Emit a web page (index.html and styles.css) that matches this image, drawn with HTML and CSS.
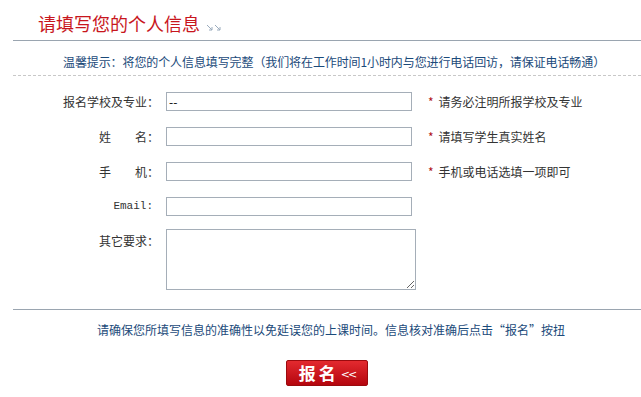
FILE: index.html
```html
<!DOCTYPE html>
<html lang="zh-CN">
<head>
    <meta charset="utf-8">
    <title>请填写您的个人信息</title>
    <link rel="stylesheet" href="styles.css">
</head>
<body>
    <div class="panel">
        <h2 class="title">请填写您的个人信息
            <svg class="arrows" width="16" height="8" viewBox="0 0 16 8">
                <path d="M1 1 L6 6 M6 3 L6 6 L3 6 M9 1 L14 6 M14 3 L14 6 L11 6" fill="none" stroke="#9aabbd" stroke-width="1"/>
            </svg>
        </h2>
        <p class="tip">温馨提示：将您的个人信息填写完整（我们将在工作时间1小时内与您进行电话回访，请保证电话畅通）</p>

        <form class="form" onsubmit="return false">
            <div class="row">
                <label for="school">报名学校及专业：</label>
                <input type="text" id="school" value="--">
                <span class="hint"><i>*</i>请务必注明所报学校及专业</span>
            </div>
            <div class="row">
                <label for="name">姓&emsp;&emsp;名：</label>
                <input type="text" id="name">
                <span class="hint"><i>*</i>请填写学生真实姓名</span>
            </div>
            <div class="row">
                <label for="phone">手&emsp;&emsp;机：</label>
                <input type="text" id="phone">
                <span class="hint"><i>*</i>手机或电话选填一项即可</span>
            </div>
            <div class="row">
                <label for="email" class="mono">Email:</label>
                <input type="text" id="email">
            </div>
            <div class="row row-area">
                <label for="other">其它要求：</label>
                <textarea id="other"></textarea>
            </div>
        </form>

        <p class="note">请确保您所填写信息的准确性以免延误您的上课时间。信息核对准确后点击“报名”按扭</p>
        <div class="actions">
            <button class="submit" type="button">报名<small>&lt;&lt;</small></button>
        </div>
    </div>
</body>
</html>
```

FILE: styles.css
```css
body {
    margin: 0;
    padding: 0;
    background: #fff;
    font-family: "Noto Sans CJK SC", "DejaVu Sans", sans-serif;
    font-size: 12px;
    color: #333;
}
.panel {
    margin-left: 13px;
}
.title {
    margin: 0;
    padding: 10px 0 4px 25px;
    height: 26px;
    line-height: 26px;
    font-size: 18px;
    font-weight: normal;
    color: #c8161d;
    border-bottom: 1px solid #9aa5b0;
}
.arrows {
    vertical-align: -1px;
    margin-left: 2px;
}
.tip {
    margin: 0;
    padding: 8px 0 0 50px;
    height: 26px;
    line-height: 26px;
    color: #1b4a7a;
    border-bottom: 1px dashed #c8c8c8;
    white-space: nowrap;
    letter-spacing: -0.1px;
}
.form {
    display: grid;
    row-gap: 16px;
    padding: 16px 0 19px;
    border-bottom: 1px solid #9aa5b0;
}
.row {
    display: grid;
    grid-template-columns: 146px auto 1fr;
    column-gap: 7px;
    align-items: center;
}
.row label {
    text-align: right;
    line-height: 19px;
    white-space: nowrap;
}
.row label.mono {
    font-family: "Liberation Mono", monospace;
    font-size: 11px;
    margin-right: 6px;
}
.row input {
    box-sizing: border-box;
    width: 246px;
    height: 19px;
    margin: 0;
    padding: 0 2px;
    border: 1px solid #a5aeb8;
    font-family: inherit;
    font-size: 12px;
    color: #000;
}
.hint {
    margin-left: 9px;
    white-space: nowrap;
}
.hint i {
    font-style: normal;
    color: #b0131a;
    margin-right: 5px;
}
.row-area {
    align-items: start;
    margin-top: -3px;
}
.row-area label {
    margin-top: 2px;
}
.row-area textarea {
    box-sizing: border-box;
    width: 250px;
    height: 61px;
    margin: 0;
    border: 1px solid #a5aeb8;
}
.note {
    margin: 0;
    padding: 12px 0 0 8px;
    line-height: 16px;
    text-align: center;
    color: #1b4a7a;
}
.actions {
    text-align: center;
    margin-top: 22px;
}
.submit {
    width: 82px;
    height: 26px;
    padding: 0;
    border: 1px solid #9b0a0e;
    border-radius: 2px;
    background: linear-gradient(#e32a2f, #b4060e);
    color: #fff;
    font-family: "Noto Sans CJK SC", sans-serif;
    font-size: 17px;
    font-weight: bold;
    letter-spacing: 3px;
    line-height: 24px;
}
.submit small {
    font-family: "DejaVu Sans", sans-serif;
    font-size: 11px;
    font-weight: normal;
    letter-spacing: -2px;
    margin-left: 2px;
    vertical-align: 2px;
}
```
